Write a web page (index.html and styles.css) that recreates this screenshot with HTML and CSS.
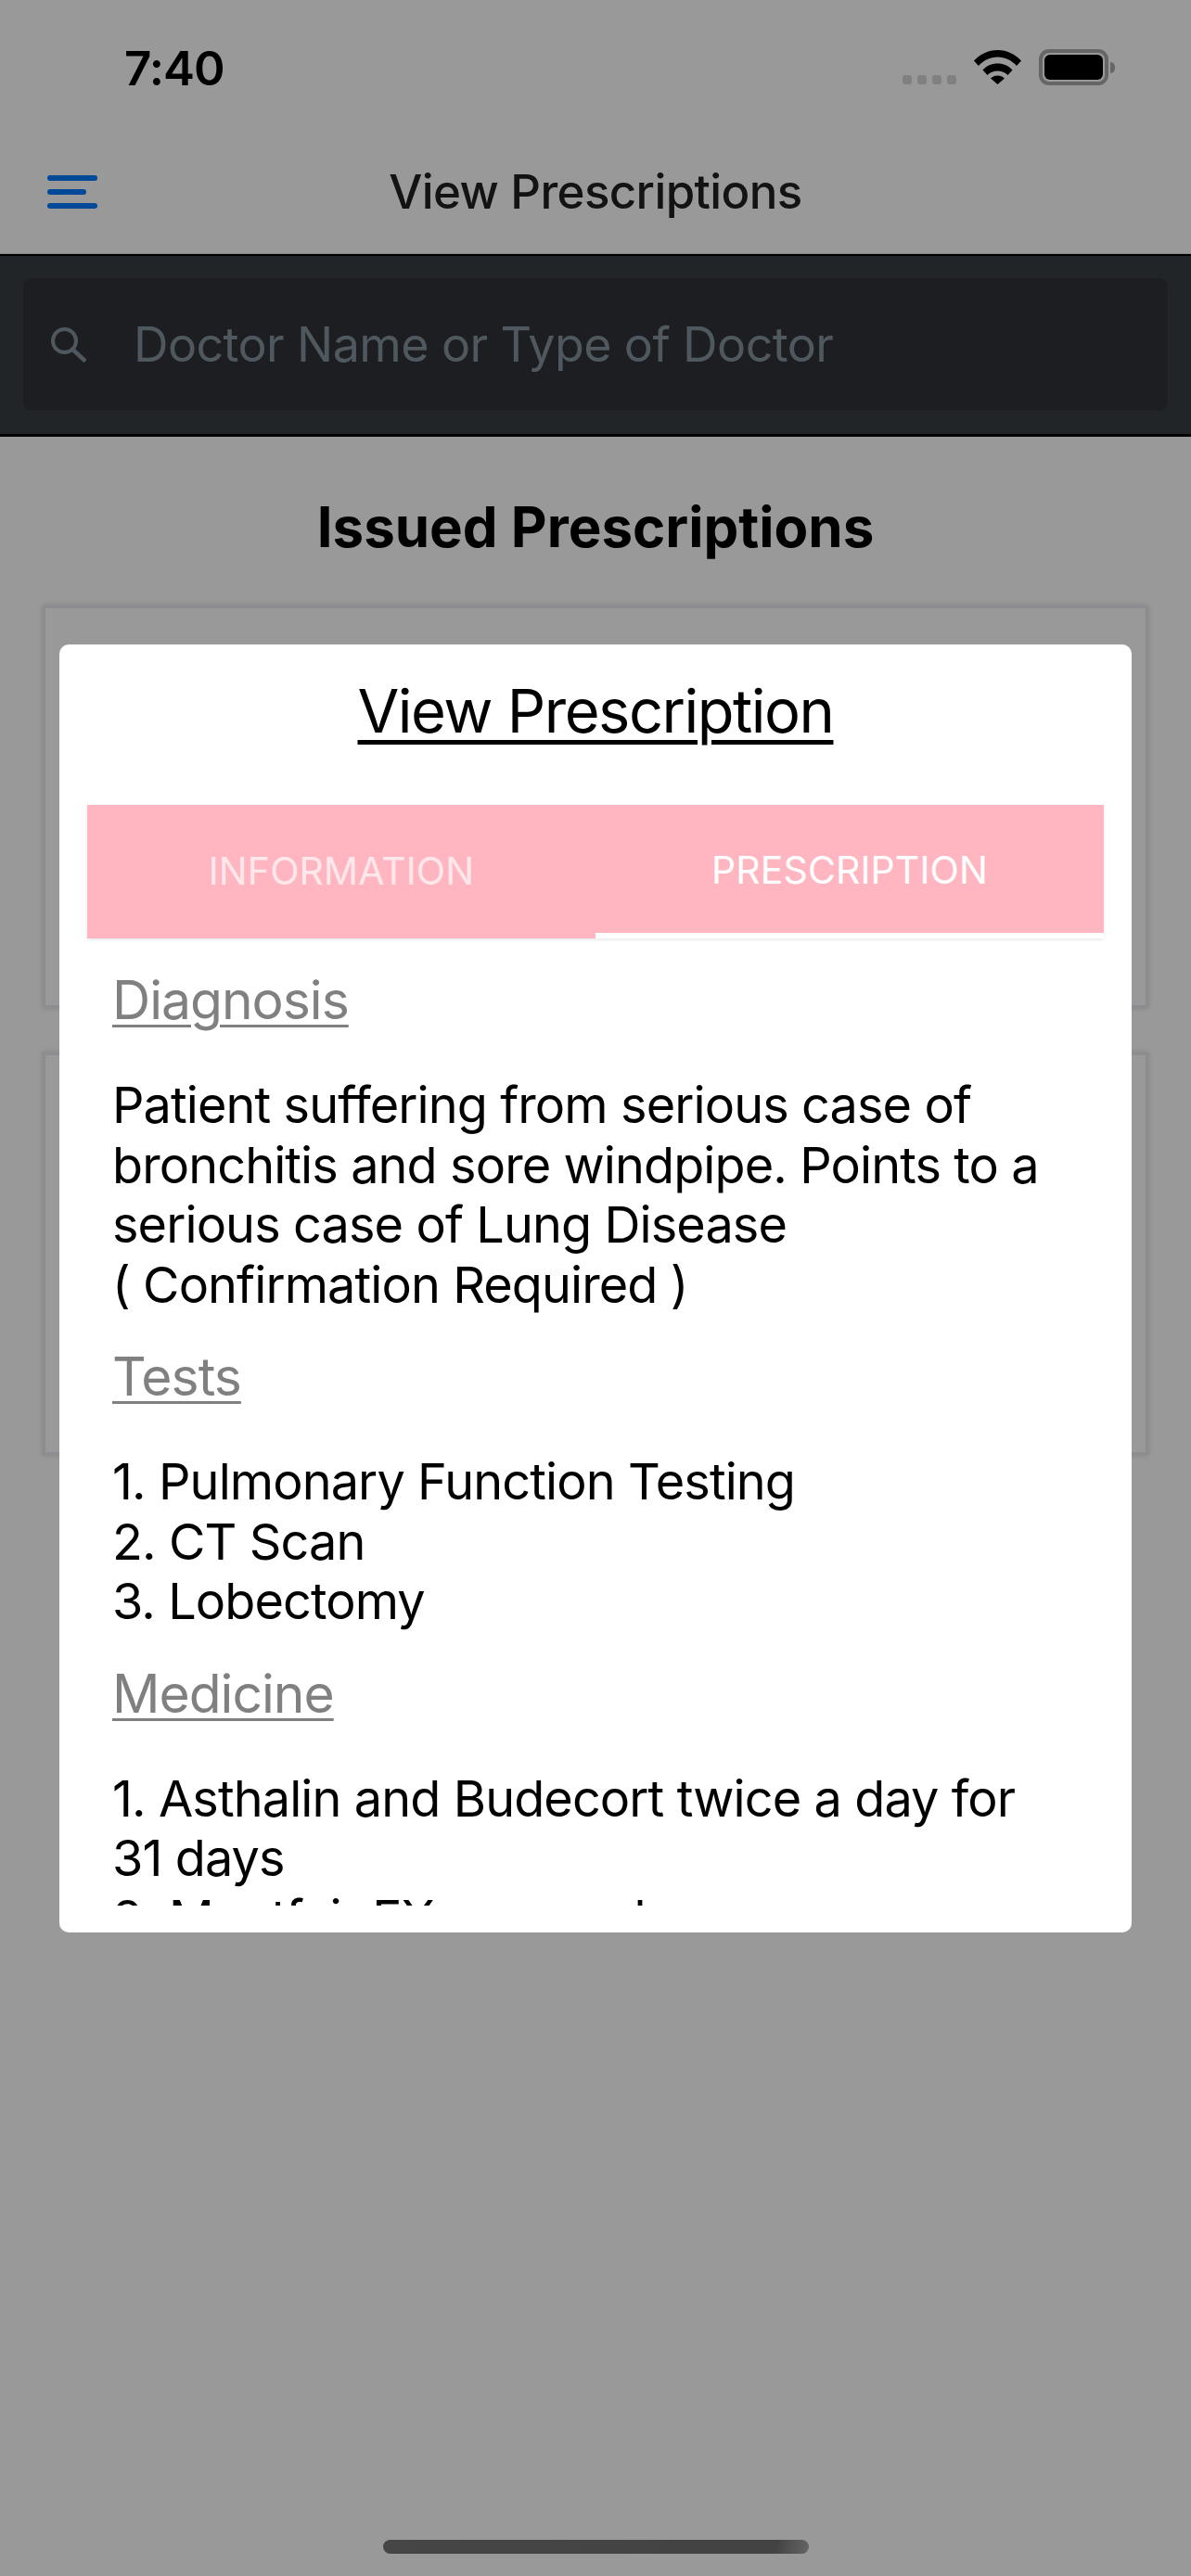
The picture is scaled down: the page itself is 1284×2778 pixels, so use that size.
FILE: index.html
```html
<!DOCTYPE html>
<html lang="en">
<head>
<meta charset="utf-8">
<title>View Prescriptions</title>
<link rel="stylesheet" href="styles.css">
</head>
<body>
<div class="screen">
  <header class="status">
    <span class="time">7:40</span>
    <div class="status-icons">
      <div class="dots"><i></i><i></i><i></i><i></i></div>
      <svg class="wifi" width="51" height="37" viewBox="0 0 51 37"><path d="M0 11.500C6.500 4.500 15.500 0 25.500 0S44.500 4.500 51 11.500L46 17C40.500 11 33.500 7.500 25.500 7.500S10.500 11 5 17Z"/><path d="M9.500 21.500C13.500 17 19 14.500 25.500 14.500S37.500 17 41.500 21.500L36.500 27C33.500 24 30 22.500 25.500 22.500S17.500 24 14.500 27Z"/><path d="M18 30.500C20 28.500 22.500 27.500 25.500 27.500S31 28.500 33 30.500L25.500 37Z"/></svg>
      <div class="battery"><div class="battery-body"><div class="battery-fill"></div></div><div class="battery-cap"></div></div>
    </div>
  </header>
  <nav class="nav">
    <div class="menu"><i class="long"></i><i class="short"></i><i class="long"></i></div>
    <h1 class="nav-title">View Prescriptions</h1>
  </nav>
  <div class="search">
    <div class="search-input">
      <svg class="search-icon" width="38" height="38" viewBox="0 0 38 38"><circle cx="14.500" cy="14.500" r="12.500" fill="none" stroke="#86939e" stroke-width="4"/><path d="M23.500 24L37 36.500" fill="none" stroke="#86939e" stroke-width="4.500"/></svg>
      <span class="placeholder">Doctor Name or Type of Doctor</span>
    </div>
  </div>
  <h2 class="issued">Issued Prescriptions</h2>
  <div class="card"></div>
  <div class="card"></div>
  <div class="home-bar"></div>
</div>

<div class="backdrop"></div>
<section class="modal">
  <h3 class="modal-title">View Prescription</h3>
  <div class="tabs">
    <div class="tab">INFORMATION</div>
    <div class="tab active">PRESCRIPTION</div>
  </div>
  <div class="content">
    <h4 class="heading">Diagnosis</h4>
    <p class="body-text">Patient suffering from serious case of bronchitis and sore windpipe. Points to a serious case of Lung Disease<br>( Confirmation Required )</p>
    <h4 class="heading">Tests</h4>
    <p class="body-text">1. Pulmonary Function Testing<br>2. CT Scan<br>3. Lobectomy</p>
    <h4 class="heading">Medicine</h4>
    <p class="body-text">1. Asthalin and Budecort twice a day for 31 days<br>2. Montfair FX once a day</p>
  </div>
</section>
</body>
</html>
```

FILE: styles.css
```css
* { box-sizing: border-box; }
html, body { margin: 0; padding: 0; }
body {
  width: 1284px;
  height: 2778px;
  overflow: hidden;
  background: #fff;
  font-family: Inter, "Liberation Sans", sans-serif;
  color: #000;
  position: relative;
}
.screen { display: flex; flex-direction: column; width: 1284px; height: 2778px; }

.status {
  height: 132px;
  padding: 42px 82px 0 134px;
  display: flex;
  justify-content: space-between;
  align-items: flex-start;
}
.time { font-size: 51px; font-weight: 600; line-height: 64px; letter-spacing: -1px; }
.status-icons { display: flex; align-items: flex-end; margin-top: 11px; height: 39px; }
.dots { display: flex; gap: 6px; margin-right: 19px; margin-bottom: 1px; }
.dots i { width: 10px; height: 10px; border-radius: 3px; background: #d6d6d6; }
.wifi { display: block; margin-right: 19px; margin-bottom: 1px; fill: #000; }
.battery { display: flex; align-items: center; height: 39px; }
.battery-body { width: 75px; height: 39px; border: 4px solid #aaa; border-radius: 11px; padding: 2px; }
.battery-fill { width: 100%; height: 100%; background: #000; border-radius: 6px; }
.battery-cap { width: 5px; height: 12px; margin-left: 2px; background: #aaa; border-radius: 0 6px 6px 0; }

.nav {
  height: 142px;
  padding-top: 9px;
  position: relative;
  display: flex;
  align-items: center;
  justify-content: center;
  border-bottom: 1px solid #ddd;
}
.menu { position: absolute; left: 51px; top: 57px; display: flex; flex-direction: column; gap: 9px; }
.menu i { display: block; height: 6px; border-radius: 3px; background: #007aff; }
.menu .long { width: 54px; }
.menu .short { width: 42px; }
.nav-title { margin: 0; font-size: 51px; font-weight: 500; line-height: 60px; letter-spacing: -0.6px; color: #212121; }

.search {
  height: 197px;
  background: #393e42;
  border-top: 2px solid #000;
  border-bottom: 3px solid #000;
  padding: 24px 25px;
}
.search-input {
  height: 143px;
  background: #303337;
  border-radius: 9px;
  display: flex;
  align-items: center;
  padding-left: 30px;
}
.search-icon { display: block; margin-right: 51px; }
.placeholder { font-size: 52px; color: #86939e; line-height: 60px; letter-spacing: -0.6px; }

.issued { margin: 0; height: 182px; display: flex; align-items: center; justify-content: center; padding-top: 11px; font-size: 60px; font-weight: 700; }

.card {
  width: 1192px;
  height: 434px;
  margin: 0 0 48px 46px;
  border: 3px solid #e9ebf0;
  box-shadow: 0 0 6px rgba(0,0,0,.15);
}
.home-bar {
  position: absolute;
  left: 413px;
  top: 2739px;
  width: 459px;
  height: 15px;
  border-radius: 8px;
  background: linear-gradient(100deg, #757575 0%, #707070 92%, #aaa 100%);
}

.backdrop { position: absolute; left: 0; top: 0; width: 1284px; height: 2778px; background: rgba(0,0,0,.4); }
.modal {
  position: absolute;
  left: 64px;
  top: 695px;
  width: 1156px;
  height: 1389px;
  background: #fff;
  border-radius: 10px;
  padding: 0 30px 29px;
  display: flex;
  flex-direction: column;
}
.modal-title { margin: 0; height: 173px; padding-top: 36px; text-align: center; font-size: 65px; font-weight: 400; line-height: 72px; letter-spacing: -1.5px; text-decoration: underline; text-decoration-thickness: 5px; text-underline-offset: 8px; }
.tabs { display: flex; height: 144px; background: #ffb6c1; box-shadow: 0 2px 3px rgba(0,0,0,.08); flex: none; }
.tab { width: 50%; display: flex; align-items: center; justify-content: center; font-size: 41px; letter-spacing: 0.1px; color: rgba(255,255,255,.7); padding-bottom: 3px; }
.tab.active { color: #fff; border-bottom: 6px solid #fff; padding-top: 2px; padding-bottom: 0; }

.content { flex: 1; overflow: hidden; padding: 33px 41px 0 27px; }
.heading { margin: 0 0 47px; font-size: 57px; font-weight: 400; line-height: 68px; letter-spacing: -1px; color: #808080; text-decoration: underline; text-decoration-thickness: 3px; text-underline-offset: 6px; }
.body-text { margin: 0 0 33px; font-size: 54px; line-height: 64.500px; letter-spacing: -0.9px; color: #000; }
```
